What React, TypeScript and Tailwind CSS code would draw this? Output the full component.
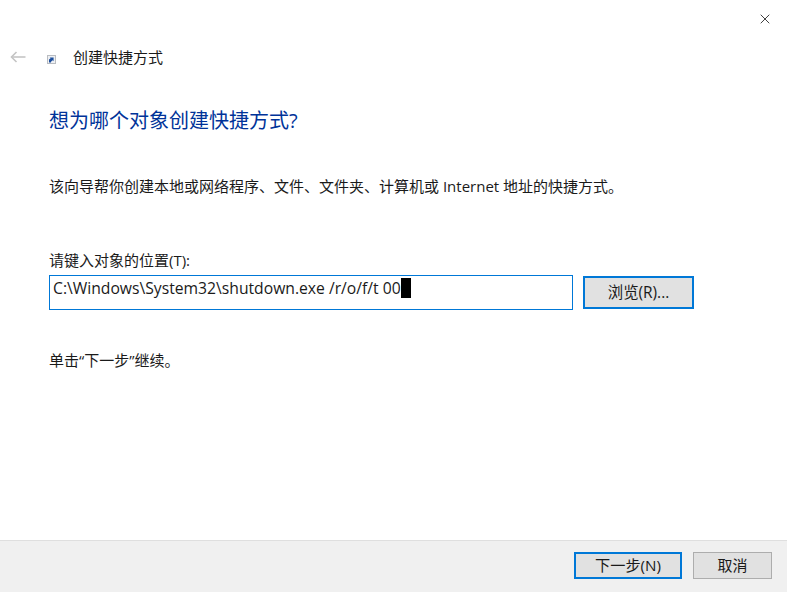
import { X } from 'lucide-react'

const fontStack = "font-['Open_Sans','Noto_Sans_CJK_SC',sans-serif]"

function ShortcutIcon() {
  return (
    <svg width="9" height="9" viewBox="0 0 9 9" className="mt-[4px] shrink-0">
      <rect x="0.5" y="0.5" width="8" height="8" fill="#eef0f3" stroke="#b9bcc1" />
      <path d="M2 7.5V4.6L3.6 3.2 2.8 2.4H6.6V6.2L5.7 5.3 4 6.8V7.5Z" fill="#1d4f9e" />
    </svg>
  )
}

function BackArrow() {
  return (
    <svg width="16" height="12" viewBox="0 0 16 12" fill="none" stroke="#c4c4c4" strokeWidth="1.6">
      <path d="M15.5 6H1.5" />
      <path d="M6.5 1L1.5 6L6.5 11" />
    </svg>
  )
}

export default function App() {
  return (
    <div className={`flex h-[592px] w-[787px] flex-col overflow-hidden bg-white text-[#1a1a1a] ${fontStack}`}>
      <div className="flex justify-end pt-[11px] pr-[14px]">
        <X size={16} strokeWidth={1.2} className="text-[#111]" />
      </div>

      <div className="mt-[18px] flex h-[24px] items-center pl-[10px]">
        <BackArrow />
        <div className="ml-[21px]">
          <ShortcutIcon />
        </div>
        <span className="ml-[17px] text-[15px] leading-[24px]">创建快捷方式</span>
      </div>

      <div className="flex-1 pl-[49px]">
        <h1 className="mt-[37px] text-[20px] leading-[30px] font-normal text-[#003399]">
          想为哪个对象创建快捷方式?
        </h1>
        <p className="mt-[38px] text-[15px] leading-[24px]">
          该向导帮你创建本地或网络程序、文件、文件夹、计算机或 Internet 地址的快捷方式。
        </p>
        <label className="mt-[50px] block text-[15px] leading-[24px]">请键入对象的位置(T):</label>
        <div className="mt-[3px] flex items-center">
          <div className="flex h-[35px] w-[524px] items-start border border-[#0078d7] pt-[2px] pl-[3px] text-[15.7px] leading-[20px]">
            <span>C:\Windows\System32\shutdown.exe /r/o/f/t 00</span>
            <span className="h-[20px] w-[10px] bg-black" />
          </div>
          <button
            type="button"
            className="ml-[10px] h-[33px] w-[111px] border-2 border-[#0078d7] bg-[#e1e1e1] text-[15.4px]"
          >
            浏览(R)...
          </button>
        </div>
        <p className="mt-[38px] text-[15px] leading-[24px]">单击“下一步”继续。</p>
      </div>

      <div className="flex h-[52px] items-start justify-end gap-[11px] border-t border-[#dfdfdf] bg-[#f0f0f0] pt-[11px] pr-[15px]">
        <button
          type="button"
          className="h-[27px] w-[108px] border-2 border-[#0078d7] bg-[#e1e1e1] text-[15.2px]"
        >
          下一步(N)
        </button>
        <button
          type="button"
          className="h-[27px] w-[79px] border border-[#adadad] bg-[#e1e1e1] text-[15px]"
        >
          取消
        </button>
      </div>
    </div>
  )
}
